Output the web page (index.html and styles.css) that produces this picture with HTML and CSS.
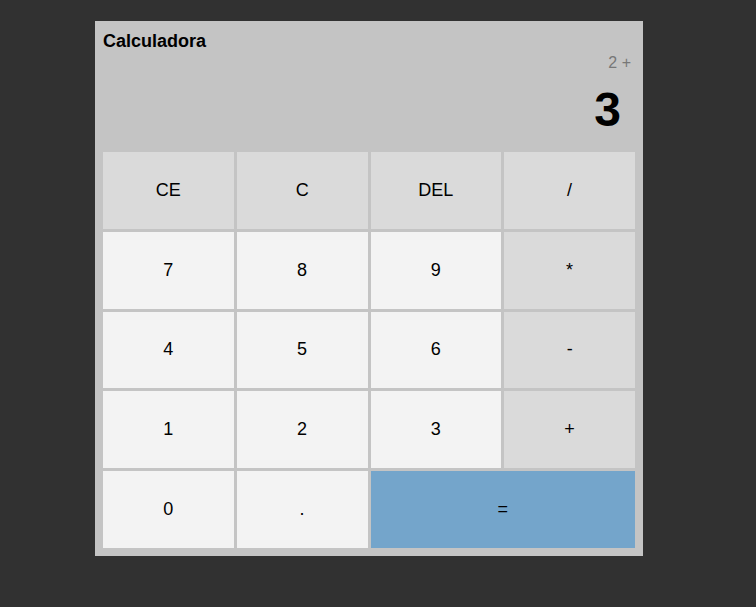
FILE: index.html
```html
<!DOCTYPE html>
<html lang="es">
<head>
<meta charset="utf-8">
<title>Calculadora</title>
<link rel="stylesheet" href="styles.css">
</head>
<body>
<div class="calc">
  <div class="title">Calculadora</div>
  <div class="display">
    <div class="expr">2 +</div>
    <div class="result">3</div>
  </div>
  <div class="keys">
    <button class="key op">CE</button>
    <button class="key op">C</button>
    <button class="key op">DEL</button>
    <button class="key op">/</button>
    <button class="key num">7</button>
    <button class="key num">8</button>
    <button class="key num">9</button>
    <button class="key op">*</button>
    <button class="key num">4</button>
    <button class="key num">5</button>
    <button class="key num">6</button>
    <button class="key op">-</button>
    <button class="key num">1</button>
    <button class="key num">2</button>
    <button class="key num">3</button>
    <button class="key op">+</button>
    <button class="key num">0</button>
    <button class="key num">.</button>
    <button class="key eq">=</button>
  </div>
</div>
</body>
</html>
```
FILE: styles.css
```css
html, body {
  margin: 0;
  padding: 0;
  background: #313131;
  font-family: "Liberation Sans", Arial, sans-serif;
}
body {
  padding: 21px 0 0 95px;
}
.calc {
  width: 548px;
  box-sizing: border-box;
  background: #c4c4c4;
  padding: 8px;
}
.title {
  margin-top: 2px;
  font-size: 18px;
  font-weight: bold;
  line-height: 20px;
  color: #000;
}
.display {
  display: flex;
  flex-direction: column;
  align-items: flex-end;
}
.expr {
  margin-top: 3px;
  padding-right: 4px;
  font-size: 16px;
  line-height: 18px;
  color: #777;
}
.result {
  margin-top: 10px;
  padding-right: 14px;
  font-size: 48px;
  line-height: 56px;
  font-weight: bold;
  color: #000;
}
.keys {
  margin-top: 14px;
  display: grid;
  grid-template-columns: repeat(4, 1fr);
  grid-auto-rows: 76.8px;
  gap: 3px;
}
.key {
  border: none;
  margin: 0;
  padding: 0;
  font-family: "Liberation Sans", Arial, sans-serif;
  font-size: 18px;
  color: #000;
}
.op { background: #dadada; }
.num { background: #f3f3f3; }
.eq {
  background: #74a5cb;
  grid-column: span 2;
}
```
